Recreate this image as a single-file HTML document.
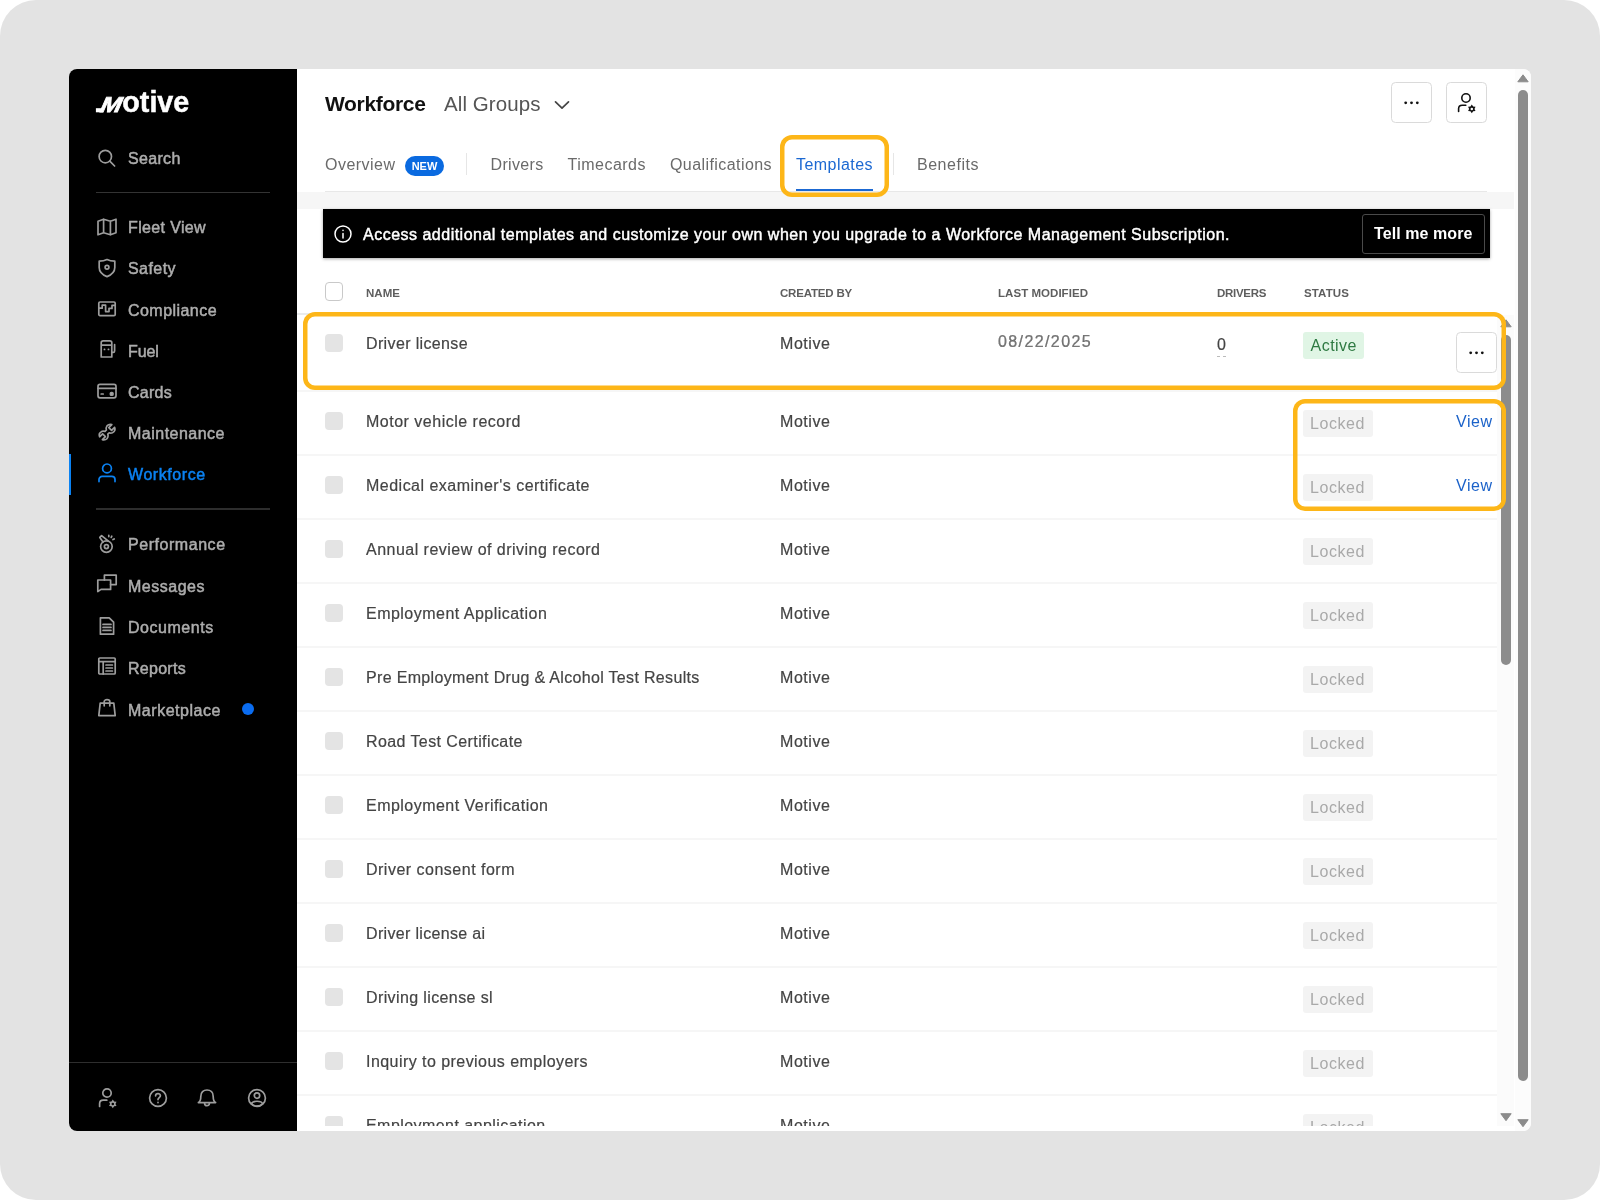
<!DOCTYPE html>
<html lang="en"><head>
<meta charset="utf-8">
<title>Workforce – Templates</title>
<style>
*{box-sizing:border-box;margin:0;padding:0}
html,body{width:1600px;height:1200px;overflow:hidden;background:#fff;font-family:"Liberation Sans",sans-serif;}
#frame{position:absolute;left:0;top:0;width:1600px;height:1200px;background:#e3e3e3;border-radius:36px;overflow:hidden;will-change:transform}
#app{position:absolute;left:69px;top:69px;width:1462px;height:1062px;background:#fff;border-radius:8px;overflow:hidden}
/* everything inside #app is positioned in page coordinates via this shifter */
#pg{position:absolute;left:-69px;top:-69px;width:1600px;height:1200px}
.a{position:absolute}
.t{position:absolute;white-space:pre}
svg{position:absolute;overflow:visible}
/* sidebar */
#side{position:absolute;left:69px;top:69px;width:228px;height:1062px;background:#000}
.nav{position:absolute;left:128px;white-space:pre;font-size:16px;line-height:20px;height:20px;color:#adadad;-webkit-text-stroke:0.5px #adadad}
.ico{left:97px;width:20px;height:20px;fill:none;color:#9d9d9d;stroke:#9d9d9d;stroke-width:1.7;stroke-linecap:round;stroke-linejoin:round}
.sdiv{position:absolute;left:96px;width:174px;height:1px;background:#333}
/* header */
.tab{position:absolute;white-space:pre;font-size:16px;line-height:20px;top:155px;color:#6a6a6a}
.vsep{position:absolute;width:1px;top:153px;height:22px;background:#e6e6e6}
.ibtn{position:absolute;width:41px;height:41px;border:1px solid #dadada;border-radius:4.5px;background:#fff}
.hl{position:absolute;box-shadow:inset 0 0 0 4.5px #fdb618;border-radius:12px}
/* table */
.th{position:absolute;white-space:pre;font-size:11.5px;line-height:14px;top:286px;color:#5e5e5e;font-weight:700}
.cb{position:absolute;left:324.500px;width:18.500px;height:18.500px;border-radius:4px;background:#e4e4e4}
.row{position:absolute;left:297px;width:1200px;height:64px;border-bottom:2px solid #f6f6f6}
.c{position:absolute;white-space:pre;font-size:16px;line-height:20px;color:#444;-webkit-text-stroke:0.2px #444}
.locked{position:absolute;left:1303px;width:70px;height:27px;border-radius:3px;background:#f3f3f3;color:#a9a9a9;font-size:16px;line-height:27px;padding-left:7px;white-space:pre}
.view{position:absolute;left:1456px;white-space:pre;font-size:16px;line-height:20px;color:#1b62c9}
</style>
</head>
<body>
<div id="frame">
<div id="app"><div id="pg">

<!-- ================= SIDEBAR ================= -->
<nav id="side"></nav>
<!--SIDEBAR_START-->
<!-- logo -->
<svg id="logo" class="a" style="left:90px;top:84.700px;width:110px;height:34px;overflow:visible" viewBox="0 0 110 34"><text transform="translate(8.2,27.3) skewX(-24) scale(1.16,1)" font-family="'Liberation Sans',sans-serif" font-weight="700" font-size="21.5" fill="#fff" stroke="#fff" stroke-width="0.75" stroke-linejoin="miter">M</text><rect x="5.900" y="23.200" width="7" height="4.100" fill="#fff"></rect><text x="32.300" y="27.300" font-family="'Liberation Sans',sans-serif" font-weight="700" font-size="30" textLength="67" lengthAdjust="spacingAndGlyphs" fill="#fff" stroke="#fff" stroke-width="0.5">otive</text></svg>

<svg class="ico" style="top:147px" viewBox="0 0 20 20"><circle cx="8.3" cy="9.6" r="6.2"></circle><path d="M12.8 14.2 17.6 19"></path></svg>
<div class="nav" style="top: 148.5px; letter-spacing: 0.316px;">Search</div>
<div class="sdiv" style="top:192px"></div>

<svg class="ico" style="top:217px" viewBox="0 0 20 20"><path d="M1 4.2 6.6 2.2 13.4 4.2 19 2.2V15.8L13.4 17.8 6.6 15.8 1 17.8ZM6.6 2.2V15.8M13.4 4.2V17.8"></path></svg>
<div class="nav" style="top: 218px; letter-spacing: 0.359px;">Fleet View</div>

<svg class="ico" style="top:258px" viewBox="0 0 20 20"><path d="M10 1.6C7.6 2.8 5 3.2 2.2 3.2V9.4C2.2 13.6 5.2 16.6 10 18.6 14.8 16.6 17.8 13.6 17.8 9.4V3.2C15 3.2 12.4 2.8 10 1.6Z"></path><circle cx="10" cy="9.2" r="1.9"></circle></svg>
<div class="nav" style="top: 259px; letter-spacing: 0.44px;">Safety</div>

<svg class="ico" style="top:299px" viewBox="0 0 20 20"><rect x="1.8" y="3" width="16.4" height="13.6" rx="1.2"></rect><path d="M1.8 9.2H5.2V6.2H8.6V12.6H12V9.4H15V6.4H18.2"></path></svg>
<div class="nav" style="top: 300.5px; letter-spacing: 0.452px;">Compliance</div>

<svg class="ico" style="top:339px;left:98.200px" viewBox="0 0 20 20"><path d="M3.2 18V3.8C3.2 2.6 4 1.8 5.2 1.8H11.8C13 1.8 13.8 2.6 13.8 3.8V18ZM3.2 6.2H13.8M13.8 13.4H15.2C16 13.4 16.6 12.8 16.6 12V5.6"></path><path d="M6.4 10.4h.2M10.4 10.4h.2"></path></svg>
<div class="nav" style="top: 341.5px; letter-spacing: -0.081px;">Fuel</div>

<svg class="ico" style="top:381px" viewBox="0 0 20 20"><rect x="1" y="3.4" width="18" height="13.4" rx="2"></rect><path d="M1 7.4H19M4.2 13H6.2"></path><rect x="13.4" y="11.6" width="2.6" height="2.6" rx="1" fill="#b8b8b8"></rect></svg>
<div class="nav" style="top: 382.5px; letter-spacing: 0.263px;">Cards</div>

<svg class="ico" style="top:422px" viewBox="0 0 20 20"><path d="M17.6 5.4 14.6 8.4 11.8 5.6 14.8 2.6C12.6 1.8 10.2 2.8 9.4 5 9 6 9 7 9.4 8L8 9.4C7 9 5.8 9 4.8 9.4 2.6 10.4 1.8 12.6 2.6 14.8L5.6 11.8 8.4 14.6 5.4 17.6C7.600 18.400 10 17.400 10.800 15.200 11.200 14.200 11.200 13.200 10.800 12.200L12.200 10.800C13.200 11.200 14.400 11.200 15.400 10.800 17.600 9.800 18.400 7.600 17.600 5.400Z"></path></svg>
<div class="nav" style="top: 423.5px; letter-spacing: 0.489px;">Maintenance</div>

<div class="a" style="left:69px;top:454px;width:2px;height:41px;background:#0b82f2"></div>
<svg class="ico" style="top:463px;stroke:#0b82f2" viewBox="0 0 20 20"><circle cx="10" cy="5.400" r="4.400"></circle><path d="M2 18.600V16.600C2 14.800 3.400 13.400 5.200 13.400H14.800C16.600 13.400 18 14.800 18 16.600V18.600"></path></svg>
<div class="nav" style="top: 465px; color: rgb(11, 130, 242); -webkit-text-stroke-color: rgb(11, 130, 242); letter-spacing: 0.566px;">Workforce</div>

<div class="sdiv" style="top:508px;height:2px;background:#2d2d2d"></div>

<svg class="ico" style="top:534px" viewBox="0 0 20 20"><circle cx="9.400" cy="12.600" r="5.800"></circle><circle cx="9.400" cy="12.600" r="2"></circle><path d="M11.400 7.200 4.600 1.600 2.800 3.400 6 8M14.200 3.400 14.800 2.200M16 5.600 17.200 5M11.800 2.600V1.400"></path></svg>
<div class="nav" style="top: 534.5px; letter-spacing: 0.546px;">Performance</div>

<svg class="ico" style="top:573px" viewBox="0 0 20 20"><path d="M7.400 7V2.200H19.200V11.600H13.600"></path><path d="M0.800 7H13.600V16.400H4L0.800 18.600Z"></path></svg>
<div class="nav" style="top: 576.5px; letter-spacing: 0.51px;">Messages</div>

<svg class="ico" style="top:615.500px" viewBox="0 0 20 20"><path d="M3.400 1.800H12.200L16.600 6.200V18.200H3.400Z"></path><path d="M6 8.400H14M6 11.400H14M6 14.400H14"></path></svg>
<div class="nav" style="top: 618px; letter-spacing: 0.531px;">Documents</div>

<svg class="ico" style="top:656px" viewBox="0 0 20 20"><rect x="1.800" y="2" width="16.400" height="16" rx="1"></rect><path d="M1.800 5.600H18.200M6.200 5.600V18M9 9H15.400M9 12H15.400M9 15H15.400"></path></svg>
<div class="nav" style="top: 659px; letter-spacing: 0.281px;">Reports</div>

<svg class="ico" style="top:698px" viewBox="0 0 20 20"><path d="M3.200 5.200H16.800L18.200 17.600H1.800ZM7.200 7.800V3.600C7.200 1 12.800 1 12.800 3.600V7.800"></path></svg>
<div class="nav" style="top: 700.5px; letter-spacing: 0.531px;">Marketplace</div>
<div class="a" style="left:242px;top:703px;width:12px;height:12px;border-radius:6px;background:#0a6cf0"></div>

<div class="a" style="left:69px;top:1062px;width:228px;height:1px;background:#2e2e2e"></div>
<svg class="ico" style="top:1088px" viewBox="0 0 20 20"><circle cx="10" cy="5" r="4.2"></circle><path d="M2.6 18.4V15.8C2.6 13.600 4.200 12.200 6.200 12.200H9.800"></path><path d="M15.80 11.60 L17.15 13.56 L19.52 13.75 L18.50 15.90 L19.52 18.05 L17.15 18.24 L15.80 20.20 L14.45 18.24 L12.08 18.05 L13.10 15.90 L12.08 13.75 L14.45 13.56Z M14.55 15.90a1.25 1.25 0 1 0 2.5 0a1.25 1.25 0 1 0 -2.5 0Z" fill="currentColor" fill-rule="evenodd" stroke="none"></path></svg>
<svg class="ico" style="top:1088px;left:147.500px" viewBox="0 0 20 20"><circle cx="10" cy="10" r="8.400"></circle><path d="M7.600 7.800C7.600 4.800 12.400 4.800 12.400 7.800 12.400 9.600 10 9.600 10 11.600M10 14.400V14.600"></path></svg>
<svg class="ico" style="top:1088px;left:197px" viewBox="0 0 20 20"><path d="M1.400 14.600C3.400 13.400 3.800 11.400 3.800 8.400 3.800 4.400 6.400 2 10 2 13.600 2 16.200 4.400 16.200 8.400 16.200 11.400 16.600 13.400 18.600 14.600ZM7.600 15.400C7.600 18.400 12.400 18.400 12.400 15.400"></path></svg>
<svg class="ico" style="top:1088px;left:247px" viewBox="0 0 20 20"><circle cx="10" cy="10" r="8.400"></circle><circle cx="10" cy="7.600" r="2.700"></circle><path d="M4.400 15.800C5.600 12.400 14.400 12.400 15.600 15.800 13.200 18.800 6.800 18.800 4.400 15.800Z"></path></svg>
<!--SIDEBAR_END-->

<!-- ================= MAIN ================= -->
<main>
<!--HEADER_START-->
<h1 class="t" style="left: 325px; top: 91.5px; font-size: 21px; line-height: 24px; font-weight: 700; color: rgb(17, 17, 17); letter-spacing: -0.332px;">Workforce</h1>
<div class="t" style="left: 444px; top: 92px; font-size: 20.5px; line-height: 24px; color: rgb(85, 85, 85); letter-spacing: 0.078px;">All Groups</div>
<svg class="a" style="left:554px;top:98px;width:16px;height:14px;fill:none;stroke:#444;stroke-width:1.7;stroke-linecap:round;stroke-linejoin:round" viewBox="0 0 16 14"><path d="M1.500 3.800 8 10.200 14.500 3.800"></path></svg>

<div class="ibtn" style="left:1391px;top:82px"></div>
<svg class="a" style="left:1391px;top:83px;width:40px;height:40px" viewBox="0 0 40 40"><circle cx="14.700" cy="19.800" r="1.400" fill="#111"></circle><circle cx="20.500" cy="19.800" r="1.400" fill="#111"></circle><circle cx="26.300" cy="19.800" r="1.400" fill="#111"></circle></svg>
<div class="ibtn" style="left:1446px;top:82px"></div>
<svg class="a" style="left:1456.300px;top:92.800px;width:20px;height:20px;color:#111;fill:none;stroke:#111;stroke-width:1.600;stroke-linecap:round;stroke-linejoin:round" viewBox="0 0 20 20"><circle cx="10" cy="5" r="4.2"></circle><path d="M2.6 18.4V15.8C2.6 13.600 4.200 12.200 6.200 12.200H9.800"></path><path d="M15.80 11.60 L17.15 13.56 L19.52 13.75 L18.50 15.90 L19.52 18.05 L17.15 18.24 L15.80 20.20 L14.45 18.24 L12.08 18.05 L13.10 15.90 L12.08 13.75 L14.45 13.56Z M14.55 15.90a1.25 1.25 0 1 0 2.5 0a1.25 1.25 0 1 0 -2.5 0Z" fill="currentColor" fill-rule="evenodd" stroke="none"></path></svg>

<div class="tab" style="left: 325px; letter-spacing: 0.477px;">Overview</div>
<div class="a" style="left:405px;top:156px;width:39px;height:20px;border-radius:10px;background:#0a6ae0"></div>
<div class="t" style="left:405px;top:156px;width:39px;height:20px;text-align:center;font-size:11px;line-height:21px;font-weight:700;color:#fff">NEW</div>
<div class="vsep" style="left:466px"></div>
<div class="tab" style="left: 490.5px; letter-spacing: 0.333px;">Drivers</div>
<div class="tab" style="left: 567.5px; letter-spacing: 0.49px;">Timecards</div>
<div class="tab" style="left: 670px; letter-spacing: 0.425px;">Qualifications</div>
<div class="tab" style="left: 796px; color: rgb(27, 104, 210); letter-spacing: 0.453px;">Templates</div>
<div class="a" style="left:796px;top:189px;width:77px;height:2px;background:#1b68d2"></div>
<div class="vsep" style="left:893px"></div>
<div class="tab" style="left: 917px; letter-spacing: 0.523px;">Benefits</div>
<div class="a" style="left:325px;top:191px;width:1162px;height:1px;background:#e8e8e8"></div>
<div class="a" style="left:297px;top:192px;width:1217px;height:17px;background:#f6f6f6"></div>
<div class="hl" style="left:780px;top:135px;width:109px;height:61.500px"></div>

<!-- banner -->
<div class="a" style="left:322.500px;top:208.500px;width:1167.500px;height:49.800px;background:#000;box-shadow:0 1px 3px rgba(0,0,0,.35)"></div>
<svg class="a" style="left:333px;top:224px;width:20px;height:20px;fill:none;stroke:#fff;stroke-width:1.500;stroke-linecap:round" viewBox="0 0 20 20"><circle cx="10" cy="10" r="8"></circle><path d="M10 9.400V14M10 6.200V6.400"></path></svg>
<div class="t" style="left: 363px; top: 224.5px; font-size: 16px; line-height: 20px; color: rgb(255, 255, 255); -webkit-text-stroke: 0.45px rgb(255, 255, 255); letter-spacing: 0.492px;">Access additional templates and customize your own when you upgrade to a Workforce Management Subscription.</div>
<div class="a" style="left:1362px;top:214px;width:123px;height:40px;border:1px solid #4a4a4a;border-radius:3px"></div>
<div class="t" style="left: 1374px; top: 224px; font-size: 16px; line-height: 20px; font-weight: 700; color: rgb(255, 255, 255); letter-spacing: 0.082px;">Tell me more</div>
<!--HEADER_END-->
<!--TABLE_START-->
<div class="a" style="left:324.500px;top:282px;width:18.500px;height:18.500px;border:1px solid #c9c9c9;border-radius:4px;background:#fff"></div>
<div class="th" style="left: 366px; letter-spacing: 0.031px;">NAME</div>
<div class="th" style="left: 780px; letter-spacing: -0.191px;">CREATED BY</div>
<div class="th" style="left: 998px; letter-spacing: 0.042px;">LAST MODIFIED</div>
<div class="th" style="left: 1217px; letter-spacing: -0.304px;">DRIVERS</div>
<div class="th" style="left: 1304px; letter-spacing: 0.117px;">STATUS</div>
<div class="a" style="left:297px;top:313px;width:1200px;height:2px;background:#e9ebed"></div>
<div id="tbody" class="a" style="left:297px;top:315px;width:1217px;height:811px;overflow:hidden"><div class="a" style="left:-297px;top:-315px;width:1600px;height:1200px">
<div class="a" style="left:1497px;top:315px;width:34px;height:816px;background:#fbfbfb"></div>
<div class="row" style="top:315px;height:77px"></div>
<div class="cb" style="top:333.5px"></div>
<div class="c" style="left: 366px; top: 334px; letter-spacing: 0.363px;">Driver license</div>
<div class="c" style="left: 780px; top: 334px; letter-spacing: 0.563px;">Motive</div>
<div class="c" style="left: 998px; top: 331.5px; color: rgb(119, 119, 119); letter-spacing: 1.392px;">08/22/2025</div>
<div class="c" style="left:1217px;top:334px;border-bottom:1px dashed #bbb;line-height:22px">0</div>
<div class="a" style="left:1303px;top:332px;width:61px;height:27px;border-radius:3px;background:#e0f5e5"></div>
<div class="t" style="left: 1310.5px; top: 332px; font-size: 16px; line-height: 27px; color: rgb(46, 122, 66); letter-spacing: 0.487px;">Active</div>
<div class="ibtn" style="left:1456px;top:332px"></div>
<svg class="a" style="left:1456px;top:332.500px;width:40px;height:40px" viewBox="0 0 40 40"><circle cx="14.700" cy="19.800" r="1.400" fill="#111"></circle><circle cx="20.500" cy="19.800" r="1.400" fill="#111"></circle><circle cx="26.300" cy="19.800" r="1.400" fill="#111"></circle></svg>
<div class="row" style="top:392px;height:64px"></div>
<div class="cb" style="top:411.5px"></div>
<div class="c" style="left: 366px; top: 412px; letter-spacing: 0.502px;">Motor vehicle record</div>
<div class="c" style="left: 780px; top: 412px; letter-spacing: 0.563px;">Motive</div>
<div class="locked" style="top:410px"><span style="letter-spacing: 0.568px;">Locked</span></div>
<div class="view" style="top: 412px; letter-spacing: 0.527px;">View</div>
<div class="row" style="top:456px;height:64px"></div>
<div class="cb" style="top:475.5px"></div>
<div class="c" style="left: 366px; top: 476px; letter-spacing: 0.488px;">Medical examiner's certificate</div>
<div class="c" style="left: 780px; top: 476px; letter-spacing: 0.563px;">Motive</div>
<div class="locked" style="top:474px"><span style="letter-spacing: 0.568px;">Locked</span></div>
<div class="view" style="top: 476px; letter-spacing: 0.527px;">View</div>
<div class="row" style="top:520px;height:64px"></div>
<div class="cb" style="top:539.5px"></div>
<div class="c" style="left: 366px; top: 540px; letter-spacing: 0.478px;">Annual review of driving record</div>
<div class="c" style="left: 780px; top: 540px; letter-spacing: 0.563px;">Motive</div>
<div class="locked" style="top:538px"><span style="letter-spacing: 0.568px;">Locked</span></div>
<div class="row" style="top:584px;height:64px"></div>
<div class="cb" style="top:603.5px"></div>
<div class="c" style="left: 366px; top: 604px; letter-spacing: 0.479px;">Employment Application</div>
<div class="c" style="left: 780px; top: 604px; letter-spacing: 0.563px;">Motive</div>
<div class="locked" style="top:602px"><span style="letter-spacing: 0.568px;">Locked</span></div>
<div class="row" style="top:648px;height:64px"></div>
<div class="cb" style="top:667.5px"></div>
<div class="c" style="left: 366px; top: 668px; letter-spacing: 0.328px;">Pre Employment Drug &amp; Alcohol Test Results</div>
<div class="c" style="left: 780px; top: 668px; letter-spacing: 0.563px;">Motive</div>
<div class="locked" style="top:666px"><span style="letter-spacing: 0.568px;">Locked</span></div>
<div class="row" style="top:712px;height:64px"></div>
<div class="cb" style="top:731.5px"></div>
<div class="c" style="left: 366px; top: 732px; letter-spacing: 0.409px;">Road Test Certificate</div>
<div class="c" style="left: 780px; top: 732px; letter-spacing: 0.563px;">Motive</div>
<div class="locked" style="top:730px"><span style="letter-spacing: 0.568px;">Locked</span></div>
<div class="row" style="top:776px;height:64px"></div>
<div class="cb" style="top:795.5px"></div>
<div class="c" style="left: 366px; top: 796px; letter-spacing: 0.468px;">Employment Verification</div>
<div class="c" style="left: 780px; top: 796px; letter-spacing: 0.563px;">Motive</div>
<div class="locked" style="top:794px"><span style="letter-spacing: 0.568px;">Locked</span></div>
<div class="row" style="top:840px;height:64px"></div>
<div class="cb" style="top:859.5px"></div>
<div class="c" style="left: 366px; top: 860px; letter-spacing: 0.495px;">Driver consent form</div>
<div class="c" style="left: 780px; top: 860px; letter-spacing: 0.563px;">Motive</div>
<div class="locked" style="top:858px"><span style="letter-spacing: 0.568px;">Locked</span></div>
<div class="row" style="top:904px;height:64px"></div>
<div class="cb" style="top:923.5px"></div>
<div class="c" style="left: 366px; top: 924px; letter-spacing: 0.329px;">Driver license ai</div>
<div class="c" style="left: 780px; top: 924px; letter-spacing: 0.563px;">Motive</div>
<div class="locked" style="top:922px"><span style="letter-spacing: 0.568px;">Locked</span></div>
<div class="row" style="top:968px;height:64px"></div>
<div class="cb" style="top:987.5px"></div>
<div class="c" style="left: 366px; top: 988px; letter-spacing: 0.386px;">Driving license sl</div>
<div class="c" style="left: 780px; top: 988px; letter-spacing: 0.563px;">Motive</div>
<div class="locked" style="top:986px"><span style="letter-spacing: 0.568px;">Locked</span></div>
<div class="row" style="top:1032px;height:64px"></div>
<div class="cb" style="top:1051.5px"></div>
<div class="c" style="left: 366px; top: 1052px; letter-spacing: 0.449px;">Inquiry to previous employers</div>
<div class="c" style="left: 780px; top: 1052px; letter-spacing: 0.563px;">Motive</div>
<div class="locked" style="top:1050px"><span style="letter-spacing: 0.568px;">Locked</span></div>
<div class="row" style="top:1096px;height:64px"></div>
<div class="cb" style="top:1115.5px"></div>
<div class="c" style="left: 366px; top: 1116px; letter-spacing: 0.442px;">Employment application</div>
<div class="c" style="left: 780px; top: 1116px; letter-spacing: 0.563px;">Motive</div>
<div class="locked" style="top:1114px"><span style="letter-spacing: 0.568px;">Locked</span></div>
</div></div>
<div class="a" style="left:1501px;top:335px;width:10px;height:330px;border-radius:5px;background:#8c8c8c"></div>
<svg class="a" style="left:1500px;top:319px;width:12px;height:8.500px" viewBox="0 0 12 8.500"><path d="M6 0.800 11.200 7.800H0.800Z" fill="#8c8c8c" stroke="#8c8c8c" stroke-width="1" stroke-linejoin="round"></path></svg>
<svg class="a" style="left:1500px;top:1113px;width:12px;height:8.500px" viewBox="0 0 12 8.500"><path d="M6 7.700 11.200 0.700H0.800Z" fill="#8c8c8c" stroke="#8c8c8c" stroke-width="1" stroke-linejoin="round"></path></svg>
<div class="a" style="left:1514.500px;top:69px;width:17px;height:1062px;background:#fcfcfc"></div>
<div class="a" style="left:1518px;top:89.700px;width:10px;height:991.500px;border-radius:5px;background:#8c8c8c"></div>
<svg class="a" style="left:1517px;top:74.300px;width:12px;height:8.500px" viewBox="0 0 12 8.500"><path d="M6 0.800 11.200 7.800H0.800Z" fill="#8c8c8c" stroke="#8c8c8c" stroke-width="1" stroke-linejoin="round"></path></svg>
<svg class="a" style="left:1517px;top:1119px;width:12px;height:8.500px" viewBox="0 0 12 8.500"><path d="M6 7.700 11.200 0.700H0.800Z" fill="#8c8c8c" stroke="#8c8c8c" stroke-width="1" stroke-linejoin="round"></path></svg>
<div class="hl" style="left:303px;top:312px;width:1202.600px;height:78.400px"></div>
<div class="hl" style="left:1293px;top:399.300px;width:212.600px;height:112.200px"></div>
<!--TABLE_END-->
</main>

</div></div>
</div>


</body></html>
